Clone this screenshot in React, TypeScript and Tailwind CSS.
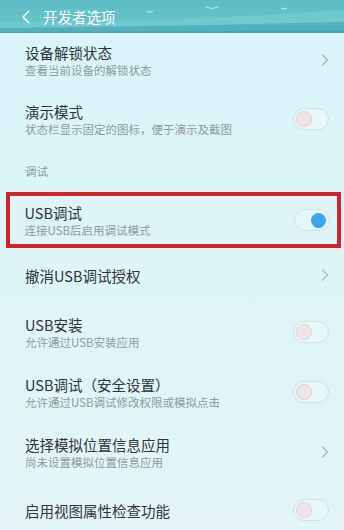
import React from 'react'

const font = { fontFamily: '"Noto Sans CJK SC", "Noto Sans", sans-serif' }

const Chevron = () => (
  <svg width="8" height="14" viewBox="0 0 8 14" className="shrink-0">
    <path d="M1 1.5 L6.5 7 L1 12.5" fill="none" stroke="#9fb3b6" strokeWidth="1.1" />
  </svg>
)

const Toggle = ({ on = false }: { on?: boolean }) => (
  <div className="relative w-[36px] h-[22px] rounded-full border border-[#c9e3e6] bg-[#e6f8fa] shrink-0">
    {on ? (
      <div className="absolute right-[3px] top-[2.5px] w-[15px] h-[15px] rounded-full bg-[#3aa6ef]" />
    ) : (
      <div className="absolute left-[2px] top-[2px] w-[16px] h-[16px] rounded-full bg-[#efe5e6] border border-[#dcd3d5]" />
    )}
  </div>
)

const Row = ({
  title,
  sub,
  right,
  h,
}: {
  title: string
  sub?: string
  right: React.ReactNode
  h: string
}) => (
  <div className={`flex items-center justify-between pl-[25px] pr-[15px] ${h}`}>
    <div className="flex flex-col">
      <span className="text-[14.5px] leading-[19px] text-[#2e3435]">{title}</span>
      {sub && <span className="text-[11.5px] leading-[16px] text-[#8e9a9c]">{sub}</span>}
    </div>
    {right}
  </div>
)

export default function App() {
  return (
    <div className="w-[344px] h-[530px] overflow-hidden bg-gradient-to-b from-[#d8f5fa] to-[#e3f5f6]" style={font}>
      <div className="relative h-[33px] bg-gradient-to-b from-[#5dbcc6] to-[#6cc6ce] overflow-hidden">
        <svg className="absolute inset-0" width="344" height="33" viewBox="0 0 344 33">
          <path d="M0 22 C80 24 200 20 344 10 L344 33 L0 33 Z" fill="#72cbd2" opacity="0.8" />
          <path d="M0 28 C100 27 220 25 344 22 L344 33 L0 33 Z" fill="#4fb2be" />
          <path d="M0 32 L344 30 L344 33 L0 33 Z" fill="#46a7b3" />
          <path d="M147 11 l3 1.5 l3 -1.5" fill="none" stroke="#e6f7f8" strokeWidth="0.8" />
          <path d="M206 7 l6 1.5 l6 -1.5" fill="none" stroke="#e6f7f8" strokeWidth="0.8" />
          <path d="M281 8 l3 1 l3 -1" fill="none" stroke="#e6f7f8" strokeWidth="0.8" />
        </svg>
        <div className="relative flex items-center h-full pl-[21px] gap-[12px]">
          <svg width="10" height="14" viewBox="0 0 10 14">
            <path d="M8 1 L2 7 L8 13" fill="none" stroke="#ffffff" strokeWidth="1.5" />
          </svg>
          <span className="text-[14.5px] text-white">开发者选项</span>
        </div>
      </div>

      <Row h="h-[54px]" title="设备解锁状态" sub="查看当前设备的解锁状态" right={<Chevron />} />
      <Row h="h-[64px]" title="演示模式" sub="状态栏显示固定的图标，便于演示及截图" right={<Toggle />} />
      <div className="h-[41px] flex items-center pl-[25px] text-[11.5px] text-[#8e9a9c]">调试</div>

      <div className="ml-[6px] mr-[3px] h-[56px] border-[4.5px] border-[#d2222e] flex items-center justify-between pl-[14.5px] pr-[7.5px]">
        <div className="flex flex-col">
          <span className="text-[14.5px] leading-[19px] text-[#2e3435]">USB调试</span>
          <span className="text-[11.5px] leading-[16px] text-[#8e9a9c]">连接USB后启用调试模式</span>
        </div>
        <Toggle on />
      </div>

      <Row h="h-[54px]" title="撤消USB调试授权" right={<Chevron />} />
      <Row h="h-[60px]" title="USB安装" sub="允许通过USB安装应用" right={<Toggle />} />
      <Row h="h-[60px]" title="USB调试（安全设置）" sub="允许通过USB调试修改权限或模拟点击" right={<Toggle />} />
      <Row h="h-[60px]" title="选择模拟位置信息应用" sub="尚未设置模拟位置信息应用" right={<Chevron />} />
      <Row h="h-[56px]" title="启用视图属性检查功能" right={<Toggle />} />
    </div>
  )
}
